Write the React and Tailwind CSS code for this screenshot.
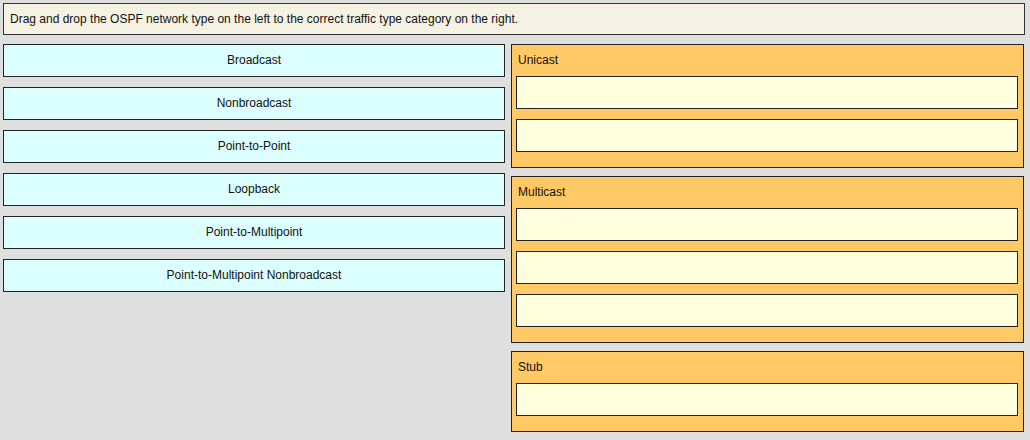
const networkTypes = [
  "Broadcast",
  "Nonbroadcast",
  "Point-to-Point",
  "Loopback",
  "Point-to-Multipoint",
  "Point-to-Multipoint Nonbroadcast",
];

const categories = [
  { name: "Unicast", slots: 2 },
  { name: "Multicast", slots: 3 },
  { name: "Stub", slots: 1 },
];

const Category = ({ name, slots }) => (
  <div className="border border-[#222] bg-[#ffc966] pl-[4px] pr-[5px] pb-[15px]">
    <div className="h-[31px] pl-[2px] pt-[8px] leading-[14px] text-[#111]">{name}</div>
    <div className="flex flex-col gap-[10px]">
      {Array.from({ length: slots }).map((_, i) => (
        <div key={i} className="h-[33px] border border-[#222] bg-[#ffffdd]" />
      ))}
    </div>
  </div>
);

export default function App() {
  return (
    <div
      className="h-[440px] w-[1030px] bg-[#dfdfdf] p-[3px] text-[12px] text-[#111]"
      style={{ fontFamily: '"Liberation Sans", Arial, sans-serif' }}
    >
      <div className="flex h-[32px] w-[1022px] items-center border border-[#333] bg-[#f5f2e3] px-[6px]">
        Drag and drop the OSPF network type on the left to the correct traffic type category on the right.
      </div>
      <div className="mt-[9px] flex gap-[6px]">
        <div className="flex w-[502px] flex-col gap-[10px]">
          {networkTypes.map((t) => (
            <div
              key={t}
              className="flex h-[33px] items-start justify-center border border-[#222] bg-[#dcffff] pt-[8px] leading-[14px]"
            >
              {t}
            </div>
          ))}
        </div>
        <div className="flex w-[513px] flex-col gap-[8px]">
          {categories.map((c) => (
            <Category key={c.name} {...c} />
          ))}
        </div>
      </div>
    </div>
  );
}
